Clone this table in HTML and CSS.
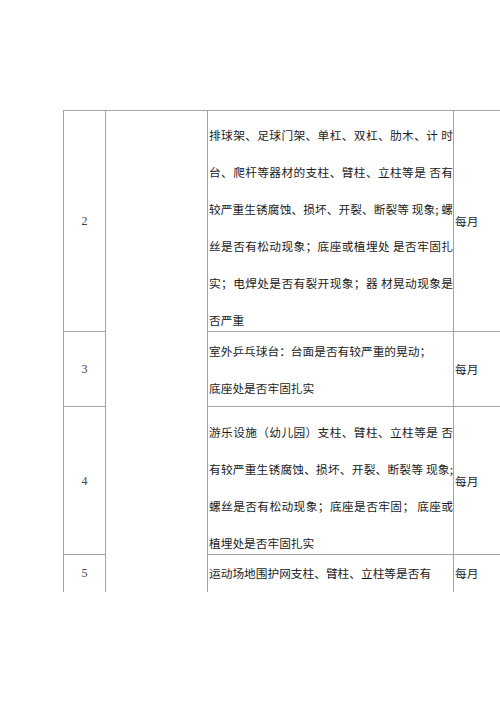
FILE: index.html
```html
<!DOCTYPE html>
<html lang="zh-CN">
<head>
<meta charset="utf-8">
<link rel="stylesheet" href="styles.css">
</head>
<body>
<div class="page">
  <div class="clip">
    <table class="grid">
      <colgroup>
        <col class="c-no">
        <col class="c-item">
        <col class="c-desc">
        <col class="c-freq">
      </colgroup>
      <tr class="r2">
        <td class="no">2</td>
        <td class="item" rowspan="4"></td>
        <td class="desc">
          <div class="lines">
            <div class="ln full">排球架、足球门架、单杠、双杠、肋木、计 时</div>
            <div class="ln full">台、爬杆等器材的支柱、臂柱、立柱等是 否有</div>
            <div class="ln full">较严重生锈腐蚀、损坏、开裂、断裂等 现象; 螺</div>
            <div class="ln full">丝是否有松动现象；底座或植埋处 是否牢固扎</div>
            <div class="ln full">实；电焊处是否有裂开现象；器 材晃动现象是</div>
            <div class="ln">否严重</div>
          </div>
        </td>
        <td class="freq">每月</td>
      </tr>
      <tr class="r3">
        <td class="no">3</td>
        <td class="desc">
          <div class="lines">
            <div class="ln">室外乒乓球台：台面是否有较严重的晃动；</div>
            <div class="ln">底座处是否牢固扎实</div>
          </div>
        </td>
        <td class="freq">每月</td>
      </tr>
      <tr class="r4">
        <td class="no">4</td>
        <td class="desc">
          <div class="lines">
            <div class="ln full">游乐设施（幼儿园）支柱、臂柱、立柱等是 否</div>
            <div class="ln full">有较严重生锈腐蚀、损坏、开裂、断裂等 现象;</div>
            <div class="ln full">螺丝是否有松动现象；底座是否牢固； 底座或</div>
            <div class="ln">植埋处是否牢固扎实</div>
          </div>
        </td>
        <td class="freq">每月</td>
      </tr>
      <tr class="r5">
        <td class="no top">5</td>
        <td class="desc">
          <div class="lines">
            <div class="ln">运动场地围护网支柱、臂柱、立柱等是否有</div>
          </div>
        </td>
        <td class="freq top">每月</td>
      </tr>
    </table>
  </div>
</div>
</body>
</html>
```

FILE: styles.css
```css
html, body {
  margin: 0;
  padding: 0;
  background: #ffffff;
  overflow: hidden;
}

.page {
  width: 500px;
  height: 708px;
  overflow: hidden;
  padding-top: 110px;
  padding-left: 63px;
  box-sizing: border-box;
}

.clip {
  height: 482px;
  width: 437px;
  overflow: hidden;
}

.grid {
  border-collapse: collapse;
  table-layout: fixed;
  width: 470px;
  font-family: "Noto Sans CJK SC", "Noto Sans", sans-serif;
  font-size: 11.7px;
  color: #1c1c1c;
}

.c-no { width: 42px; }
.c-item { width: 102px; }
.c-desc { width: 246px; }
.c-freq { width: 80px; }

.grid td {
  border: 1px solid #a3a3a3;
  padding: 0;
  vertical-align: middle;
  line-height: 14px;
}

.grid td.no {
  text-align: center;
  font-family: "Liberation Serif", "DejaVu Serif", serif;
  font-size: 12px;
  color: #444444;
}

.grid td.freq {
  text-align: left;
  padding-left: 1px;
  white-space: nowrap;
}

.grid td.top {
  vertical-align: top;
  padding-top: 11px;
}

.grid td.desc {
  vertical-align: top;
}

.lines {
  display: flex;
  flex-direction: column;
  gap: 23px;
  padding-left: 1px;
}

.ln {
  white-space: nowrap;
  height: 14px;
}

.ln.full {
  text-align: justify;
  text-align-last: justify;
}

.r2 .lines { padding-top: 17px; padding-bottom: 4px; }
.r3 .lines { padding-top: 12px; padding-bottom: 11px; }
.r4 .lines { padding-top: 18px; padding-bottom: 4px; }
.r5 .lines { padding-top: 11px; padding-bottom: 40px; }
.r5 td { height: 60px; }
```
